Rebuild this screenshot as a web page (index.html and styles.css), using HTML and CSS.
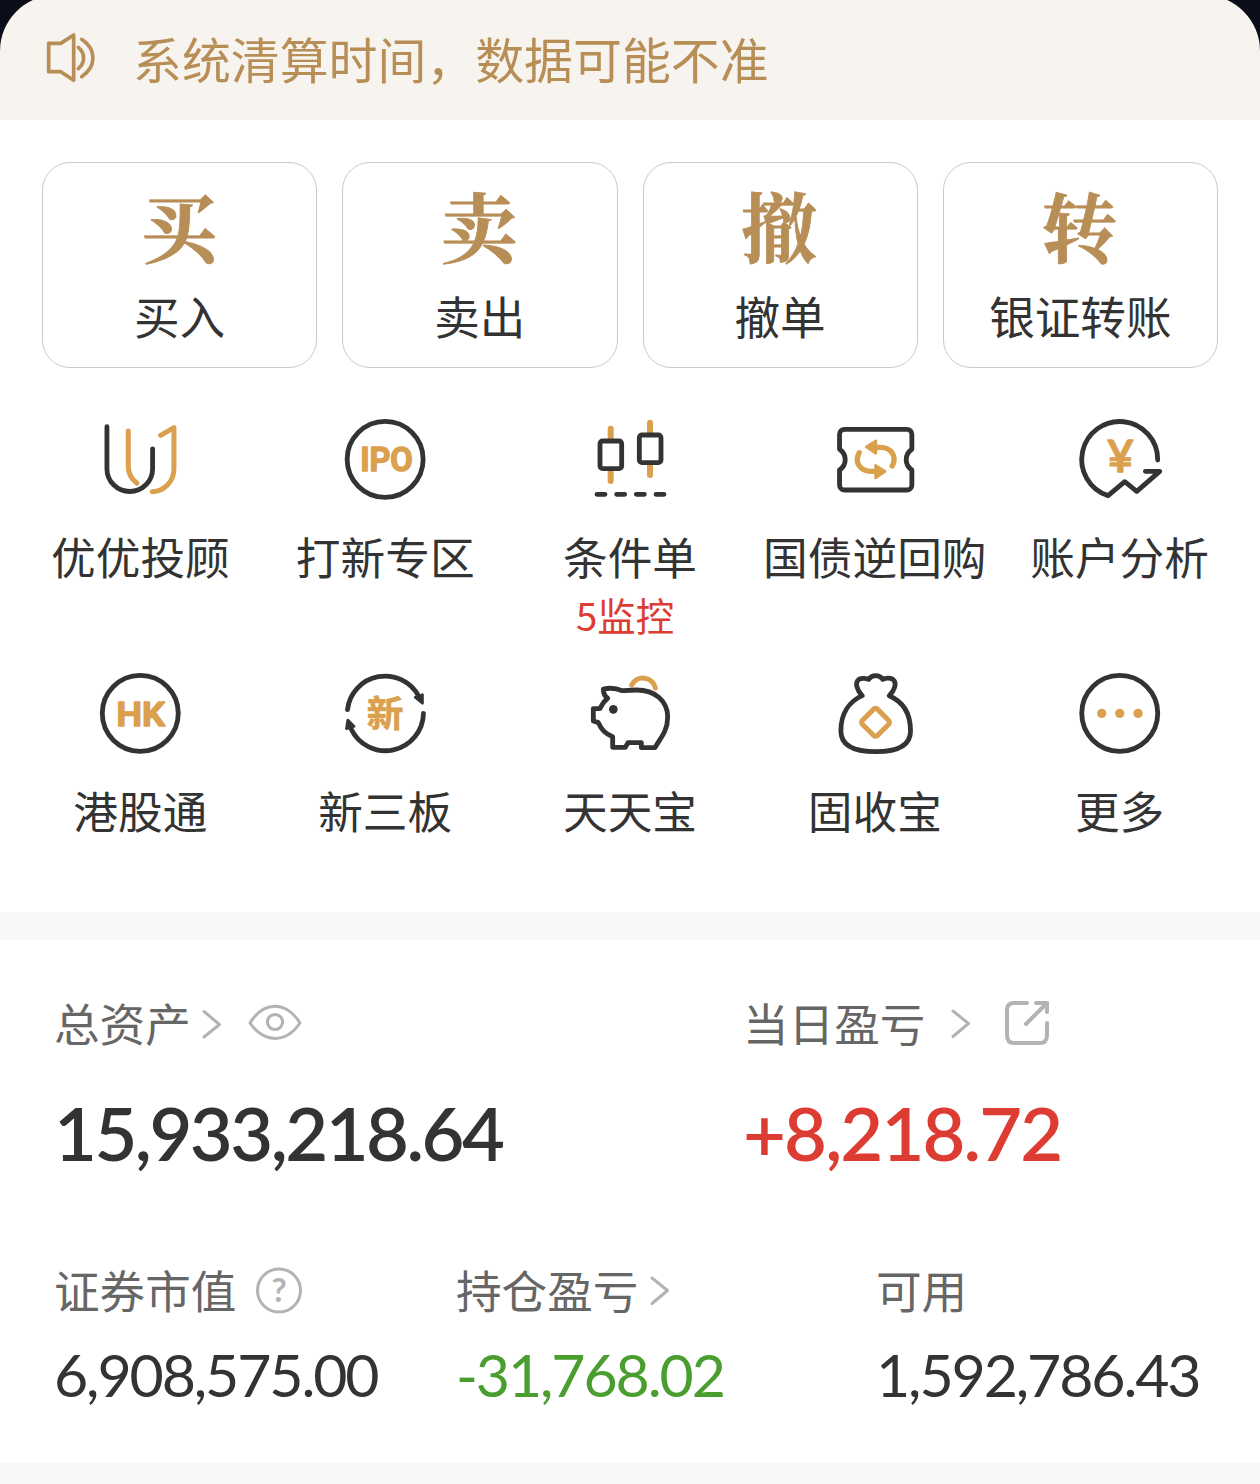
FILE: index.html
```html
<!DOCTYPE html>
<html lang="zh-CN">
<head>
<meta charset="utf-8">
<title>交易</title>
<link rel="stylesheet" href="styles.css">
</head>
<body>
<header class="notice">
  <svg class="notice-icon" viewBox="126 84 180 180"><path d="M146 130H182L221 105V241L182 215H146Z"/><path d="M235 142C256 160 256 188 235 206M245 118C290 148 290 200 245 230"/></svg>
  <span class="notice-text">系统清算时间，数据可能不准</span>
</header>
<main>
  <section class="trade">
    <a class="card"><span class="card-mark">买</span><span class="card-label">买入</span></a>
    <a class="card"><span class="card-mark">卖</span><span class="card-label">卖出</span></a>
    <a class="card"><span class="card-mark">撤</span><span class="card-label">撤单</span></a>
    <a class="card"><span class="card-mark">转</span><span class="card-label">银证转账</span></a>
  </section>
  <section class="tools">
    <a class="tool">
      <svg class="icon" viewBox="46.2 42 270 270"><path class="gold" d="M146 93V198Q146 230 172 250M243 106L283 83V205A68 68 0 0 1 218 275"/><path d="M82 80V206A68.500 68.500 0 0 0 219 206V147"/></svg>
      <span class="tool-label">优优投顾</span>
    </a>
    <a class="tool">
      <svg class="icon" viewBox="780.6 42 270 270"><circle cx="916" cy="178" r="114"/><text class="mark" x="841" y="214" font-size="102" textLength="158" lengthAdjust="spacingAndGlyphs">IPO</text></svg>
      <span class="tool-label">打新专区</span>
    </a>
    <a class="tool">
      <svg class="icon" viewBox="45 42 270 270"><path class="gold wick" d="M122 86V117M122 213V243M240 68V99M240 194V225"/><rect x="90" y="123" width="65" height="83" rx="8"/><rect x="208" y="105" width="65" height="83" rx="8"/><path d="M81 283H105M140 283H164M199 283H223M258 283H282"/></svg>
      <span class="tool-label">条件单</span>
      <span class="tool-note">5监控</span>
    </a>
    <a class="tool">
      <svg class="icon" viewBox="779.4 42 270 270"><path d="M823 88H1010A15 15 0 0 1 1025 103V148Q1008 160 1008 179T1025 210V255A15 15 0 0 1 1010 270H823A15 15 0 0 1 808 255V210Q825 198 825 179T808 148V103A15 15 0 0 1 823 88Z"/><path class="gold arrows" d="M966 198C982 168 962 142 930 142H912M867 158C851 188 871 214 903 214H921"/><path class="gold-fill" d="M888 141L917 123V160ZM945 214L916 196V234Z"/></svg>
      <span class="tool-label">国债逆回购</span>
    </a>
    <a class="tool">
      <svg class="icon" viewBox="73.8 42 270 270"><path d="M322 180A114 114 0 1 0 173 287L223 245L259 274L328 214H285"/><text class="mark yen" x="170" y="217" font-size="132" textLength="80" lengthAdjust="spacingAndGlyphs">¥</text></svg>
      <span class="tool-label">账户分析</span>
    </a>
    <a class="tool">
      <svg class="icon" viewBox="46.2 39 270 270"><circle cx="182" cy="175" r="114"/><text class="mark" x="111" y="212" font-size="102" textLength="145" lengthAdjust="spacingAndGlyphs">HK</text></svg>
      <span class="tool-label">港股通</span>
    </a>
    <a class="tool">
      <svg class="icon" viewBox="780.6 39 270 270"><path d="M803 164A114 114 0 0 1 1017 124M1031 175A114 114 0 0 1 814 222"/><path class="dark-fill" d="M1028 119V145L1006 127ZM804 195L823 214L800 221Z"/><text class="mark cjk" x="916" y="217" font-size="110" text-anchor="middle">新</text></svg>
      <span class="tool-label">新三板</span>
    </a>
    <a class="tool">
      <svg class="icon" viewBox="45 39 270 270"><path class="gold" d="M185 90A38 38 0 0 1 256 99"/><path d="M157 107C140 100 118 98 100 102C100 115 106 125 113 130C101 139 95 149 90 161H70V198L85 203C92 220 108 238 128 245V277H166L174 263H214V278H255C270 250 293 230 293 186C293 138 255 105 200 105C180 105 170 106 157 107Z"/><circle class="dot-dark" cx="130" cy="163" r="13"/></svg>
      <span class="tool-label">天天宝</span>
    </a>
    <a class="tool">
      <svg class="icon" viewBox="779.4 39 270 270"><path d="M876 122C862 108 852 84 866 73C875 68 890 70 895 73C905 58 928 58 938 73C945 69 960 68 968 73C982 84 972 108 957 122C997 139 1021 175 1021 228C1021 272 980 290 917 290C850 290 812 272 812 228C812 175 838 139 876 122Z"/><rect class="gold" x="884" y="170" width="64" height="64" rx="8" transform="rotate(45 916 202)"/></svg>
      <span class="tool-label">固收宝</span>
    </a>
    <a class="tool">
      <svg class="icon" viewBox="73.8 39 270 270"><circle cx="208" cy="175" r="114"/><g class="dot-gold"><circle cx="154" cy="175" r="14"/><circle cx="208" cy="175" r="14"/><circle cx="263" cy="175" r="14"/></g></svg>
      <span class="tool-label">更多</span>
    </a>
  </section>
  <section class="assets">
    <div class="summary">
      <div class="stat">
        <div class="stat-label"><span>总资产</span><svg class="chevron" viewBox="0 0 20 30"><path d="M1 3.500L16.500 16.500L1 29"/></svg><svg class="eye" viewBox="0 0 54 38"><path d="M2 19C16-3.500 38-3.500 52 19C38 39.500 16 39.500 2 19Z"/><circle cx="27" cy="18" r="7.600"/></svg></div>
        <div class="total">15,933,218.64</div>
      </div>
      <div class="stat">
        <div class="stat-label"><span>当日盈亏</span><svg class="chevron chevron-far" viewBox="0 0 20 30"><path d="M2 3L17.500 15.500L2 28.500"/></svg><svg class="share" viewBox="0 0 46 46"><path d="M23 3H10Q3 3 3 10V35Q3 43 10 43H36Q43 43 43 35V23M32 3H43V12M43 3L22 24"/></svg></div>
        <div class="total rise">+8,218.72</div>
      </div>
    </div>
    <div class="details">
      <div class="stat">
        <div class="stat-label"><span>证券市值</span><svg class="help" viewBox="0 0 48 48"><circle cx="24" cy="24.500" r="21.500"/><text x="24" y="36" font-size="33" text-anchor="middle">?</text></svg></div>
        <div class="value">6,908,575.00</div>
      </div>
      <div class="stat">
        <div class="stat-label"><span>持仓盈亏</span><svg class="chevron" viewBox="0 0 20 30"><path d="M2 3L17.500 15.500L2 28.500"/></svg></div>
        <div class="value fall">-31,768.02</div>
      </div>
      <div class="stat">
        <div class="stat-label"><span>可用</span></div>
        <div class="value">1,592,786.43</div>
      </div>
    </div>
  </section>
</main>
</body>
</html>
```
FILE: styles.css
```css
* { box-sizing: border-box; }
body {
  margin: 0;
  width: 1260px;
  height: 1484px;
  overflow: hidden;
  display: flex;
  flex-direction: column;
  background: #0b0e18;
  color: #333;
  font-family: "Noto Sans CJK SC", sans-serif;
}
svg { flex: none; fill: none; overflow: visible; stroke-linecap: round; stroke-linejoin: round; }

.notice {
  display: flex;
  align-items: center;
  flex: none;
  height: 125px;
  margin-top: -5px;
  padding: 1px 42px 0;
  background: #f7f3ee;
  border-radius: 56px 56px 0 0;
  color: #b88e57;
}
.notice-icon { width: 60px; height: 60px; stroke: #b88e57; stroke-width: 11; }
.notice-text { margin-left: 31px; font-size: 48.9px; line-height: 60px; }

main { flex: 1; background: #f8f8fb; }
.trade {
  display: grid;
  grid-template-columns: repeat(4, 1fr);
  gap: 25px;
  padding: 42px 42px 0;
  background: #fff;
}
.card {
  display: flex;
  flex-direction: column;
  align-items: center;
  height: 206px;
  padding-top: 20px;
  border: 1px solid #cfc9c2;
  border-radius: 28px;
}
.card-mark {
  padding-right: 2px;
  color: #b88e57;
  font: 700 76px/84px "Noto Serif CJK SC", "Noto Serif SC", "Noto Sans CJK SC", serif;
  -webkit-text-stroke: 0.8px #b88e57;
}
.card-label { margin-top: 18px; font-size: 45.6px; line-height: 60px; }

.tools {
  display: grid;
  grid-template-columns: repeat(5, 1fr);
  grid-auto-rows: 254px;
  height: 544px;
  padding: 46px 18px 0;
  background: #fff;
}
.tool { display: flex; flex-direction: column; align-items: center; white-space: nowrap; }
.icon { width: 90px; height: 90px; stroke: #333; stroke-width: 14.5; }
.icon .gold { stroke: #dba04e; stroke-width: 15; }
.icon .arrows { stroke-width: 16; }
.icon .wick { stroke-width: 18; }
.icon .gold-fill { fill: #dba04e; stroke: #dba04e; stroke-width: 8; }
.icon .dark-fill { fill: #333; stroke-width: 8; }
.icon .dot-dark { fill: #333; stroke: none; }
.icon .dot-gold { fill: #dba04e; stroke: none; }
.mark { fill: #dba04e; stroke: #dba04e; stroke-width: 5; font-family: Roboto, sans-serif; font-weight: 600; }
.mark.yen { stroke-width: 4; font-family: Lato, sans-serif; }
.mark.cjk { stroke-width: 2; font-family: "Noto Sans CJK SC", sans-serif; }
.tool-label { margin-top: 22px; font-size: 44.7px; line-height: 60px; }
.tool-note { margin: 3px 10px 0 0; color: #dc3c32; font-size: 38.4px; line-height: 50px; }

.assets {
  height: 523px;
  margin-top: 28px;
  padding: 53px 0 0 54px;
  background: #fff;
}
.summary { display: grid; grid-template-columns: 689px 1fr; }
.details { display: grid; grid-template-columns: 402px 420px 1fr; margin-top: 81px; }
.stat-label {
  display: flex;
  align-items: center;
  height: 60px;
  color: #666;
  font-size: 45.6px;
  white-space: nowrap;
}
.stat-label span { height: 60px; line-height: 58px; }
.stat-label svg { stroke: #b3b3b3; stroke-width: 3; }
.chevron { width: 20px; height: 30px; margin-left: 12px; }
.chevron-far { margin-left: 26px; }
.eye { width: 54px; height: 38px; margin-left: 25px; }
.share { width: 46px; height: 46px; margin-left: 33px; }
.stat-label .share { stroke-width: 4; }
.help { width: 48px; height: 48px; margin-left: 19px; }
.help text { fill: #b3b3b3; stroke: none; font-family: Lato, sans-serif; font-weight: 700; }
.total {
  margin-top: 35px;
  margin-bottom: 1px;
  font: 600 74px/90px Lato, sans-serif;
  letter-spacing: -2.5px;
}
.value {
  margin-top: 15px;
  font: 400 59px/80px Lato, sans-serif;
  letter-spacing: -2.100px;
}
.total.rise { letter-spacing: -1.850px; }
.rise { color: #dc3c32; }
.fall { color: #4a9e2f; }
```
